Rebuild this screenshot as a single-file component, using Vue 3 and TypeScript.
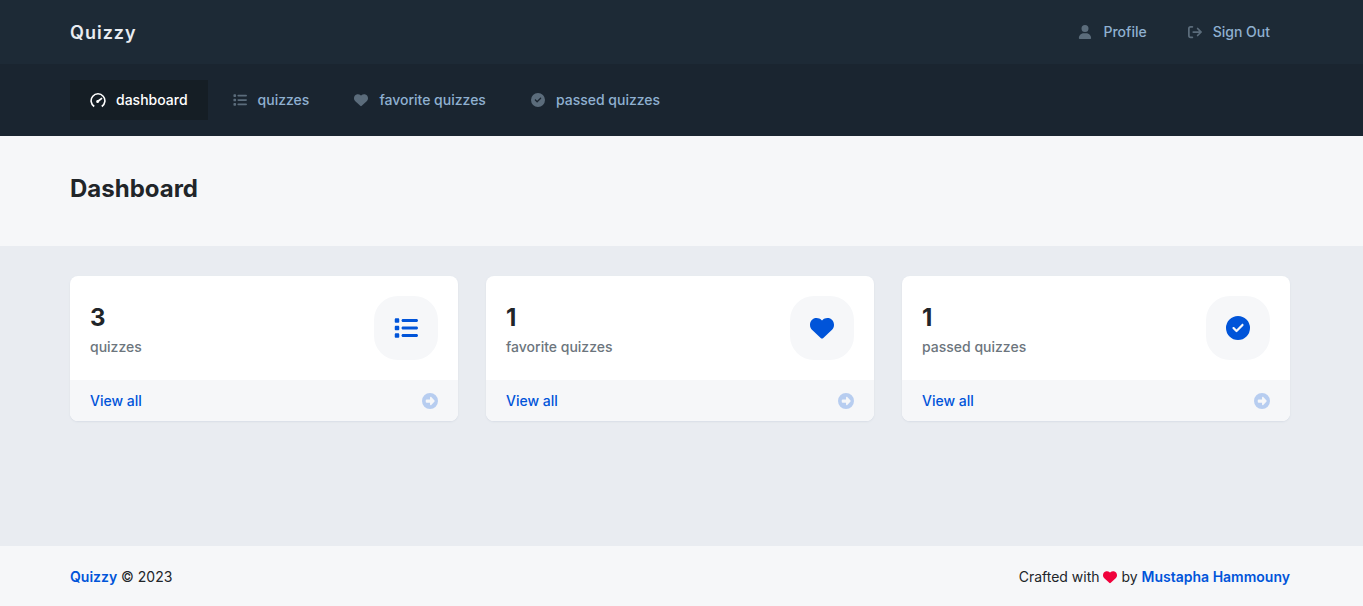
<script setup lang="ts">
type IconName = 'gauge' | 'list' | 'heart' | 'check' | 'user' | 'exit' | 'arrow'

interface Stat {
  count: number
  label: string
  icon: IconName
}

const icons: Record<IconName, { box: string; path: string }> = {
  gauge: {
    box: '0 0 16 16',
    path: 'M3.400 15.100A8.200 8.200 0 1 1 12.600 15.100L11.500 13.700A6.500 6.500 0 1 0 4.500 13.700ZM11.900 4.900 12.800 6.100 9.300 9.100A1.600 1.600 0 1 1 8 7.500Z',
  },
  list: {
    box: '0 0 512 512',
    path: 'M40 48C26.700 48 16 58.700 16 72v48c0 13.300 10.700 24 24 24h48c13.300 0 24-10.700 24-24V72c0-13.300-10.700-24-24-24H40zM192 64c-17.700 0-32 14.300-32 32s14.300 32 32 32h288c17.700 0 32-14.300 32-32s-14.300-32-32-32H192zm0 160c-17.700 0-32 14.300-32 32s14.300 32 32 32h288c17.700 0 32-14.300 32-32s-14.300-32-32-32H192zm0 160c-17.700 0-32 14.300-32 32s14.300 32 32 32h288c17.700 0 32-14.300 32-32s-14.300-32-32-32H192zM16 232v48c0 13.300 10.700 24 24 24h48c13.300 0 24-10.700 24-24v-48c0-13.300-10.700-24-24-24H40c-13.300 0-24 10.700-24 24zm24 136c-13.300 0-24 10.700-24 24v48c0 13.300 10.700 24 24 24h48c13.300 0 24-10.700 24-24v-48c0-13.300-10.700-24-24-24H40z',
  },
  heart: {
    box: '0 0 512 512',
    path: 'M47.600 300.400L228.300 469.100c7.500 7 17.400 10.900 27.700 10.900s20.200-3.900 27.700-10.900L464.400 300.400c30.400-28.300 47.600-68 47.600-109.500v-5.800c0-69.900-50.500-129.500-119.400-141C347 36.500 300.600 51.400 268 84L256 96 244 84c-32.600-32.600-79-47.500-124.600-39.900C50.500 55.600 0 115.200 0 185.100v5.800c0 41.500 17.200 81.200 47.600 109.500z',
  },
  check: {
    box: '0 0 512 512',
    path: 'M256 512A256 256 0 1 0 256 0a256 256 0 1 0 0 512zM369 209L241 337c-9.400 9.400-24.600 9.400-33.900 0l-64-64c-9.400-9.400-9.400-24.600 0-33.900s24.600-9.400 33.900 0l47 47L335 175c9.400-9.400 24.600-9.400 33.900 0s9.400 24.600 0 33.900z',
  },
  user: {
    box: '-32 0 512 512',
    path: 'M224 256A128 128 0 1 0 224 0a128 128 0 1 0 0 256zM178.300 304C79.800 304 0 383.800 0 482.300 0 498.700 13.300 512 29.700 512h388.600c16.400 0 29.700-13.300 29.700-29.700C448 383.800 368.200 304 269.700 304z',
  },
  exit: {
    box: '0 0 512 512',
    path: 'M160 32a32 32 0 0 1 0 64H96a32 32 0 0 0-32 32v256a32 32 0 0 0 32 32h64a32 32 0 0 1 0 64H96a96 96 0 0 1-96-96V128a96 96 0 0 1 96-96zM502.600 278.600l-128 128a32 32 0 0 1-45.300-45.300L402.700 288H192a32 32 0 0 1 0-64h210.700l-73.400-73.400a32 32 0 0 1 45.300-45.300l128 128a32 32 0 0 1 0 45.300z',
  },
  arrow: {
    box: '0 0 512 512',
    path: 'M256 0a256 256 0 1 0 0 512A256 256 0 1 0 256 0zM297 385.400c-4.400 4.200-10.300 6.600-16.400 6.600-13.100 0-23.700-10.600-23.700-23.700V308H150c-17.700 0-30-12-30-30v-44c0-18 12.300-30 30-30h106.900v-60.300c0-13.100 10.600-23.700 23.700-23.700 6.100 0 12 2.400 16.400 6.600l97.300 106.800c6.300 5.900 9.800 14.100 9.800 22.700s-3.500 16.800-9.800 22.700z',
  },
}

const accountLinks: { label: string; icon: IconName }[] = [
  { label: 'Profile', icon: 'user' },
  { label: 'Sign Out', icon: 'exit' },
]

const navLinks: { label: string; icon: IconName; active?: boolean }[] = [
  { label: 'dashboard', icon: 'gauge', active: true },
  { label: 'quizzes', icon: 'list' },
  { label: 'favorite quizzes', icon: 'heart' },
  { label: 'passed quizzes', icon: 'check' },
]

const stats: Stat[] = [
  { count: 3, label: 'quizzes', icon: 'list' },
  { count: 1, label: 'favorite quizzes', icon: 'heart' },
  { count: 1, label: 'passed quizzes', icon: 'check' },
]
</script>

<template>
  <div class="page">
    <header class="header">
      <div class="container header-row">
        <a href="#" class="brand">Quizzy</a>
        <nav class="account" aria-label="Account">
          <a v-for="link in accountLinks" :key="link.label" href="#" class="nav-link">
            <svg class="icon" :viewBox="icons[link.icon].box" aria-hidden="true">
              <path fill-rule="evenodd" :d="icons[link.icon].path" />
            </svg>
            {{ link.label }}
          </a>
        </nav>
      </div>
    </header>

    <div class="nav-bar">
      <nav class="container main-nav" aria-label="Main">
        <a
          v-for="link in navLinks"
          :key="link.label"
          href="#"
          class="nav-link"
          :class="{ active: link.active }"
        >
          <svg class="icon" :viewBox="icons[link.icon].box" aria-hidden="true">
            <path fill-rule="evenodd" :d="icons[link.icon].path" />
          </svg>
          {{ link.label }}
        </a>
      </nav>
    </div>

    <main>
      <div class="hero">
        <div class="container">
          <h1>Dashboard</h1>
        </div>
      </div>
      <div class="container cards">
        <section v-for="stat in stats" :key="stat.label" class="card">
          <div class="card-body">
            <div>
              <div class="count">{{ stat.count }}</div>
              <div class="label">{{ stat.label }}</div>
            </div>
            <div class="badge">
              <svg :viewBox="icons[stat.icon].box" aria-hidden="true">
                <path fill-rule="evenodd" :d="icons[stat.icon].path" />
              </svg>
            </div>
          </div>
          <a href="#" class="card-footer">
            <span>View all</span>
            <svg :viewBox="icons.arrow.box" aria-hidden="true">
              <path fill-rule="evenodd" :d="icons.arrow.path" />
            </svg>
          </a>
        </section>
      </div>
    </main>

    <footer class="footer">
      <div class="container footer-row">
        <div><a href="#">Quizzy</a> © 2023</div>
        <div>
          Crafted with
          <svg class="love" :viewBox="icons.heart.box" role="img" aria-label="love">
            <path :d="icons.heart.path" />
          </svg>
          by <a href="#">Mustapha Hammouny</a>
        </div>
      </div>
    </footer>
  </div>
</template>

<style>
body {
  margin: 0;
}
</style>

<style scoped>
.page {
  display: flex;
  flex-direction: column;
  min-height: 100vh;
  background: #e9ecf1;
  color: #212529;
  font-family: Inter, "Liberation Sans", sans-serif;
  font-size: 14px;
  line-height: 21px;
}
.page,
.page * {
  box-sizing: border-box;
}
a {
  color: #0054d9;
  text-decoration: none;
}
svg {
  fill: currentColor;
  flex: none;
}
.container {
  width: 100%;
  max-width: 1363px;
  margin: 0 auto;
  padding: 0 73px 0 70px;
}
.header {
  background: #1d2a36;
}
.header-row {
  display: flex;
  align-items: center;
  justify-content: space-between;
  height: 64px;
}
.brand {
  color: #e9ecf1;
  font-size: 18px;
  font-weight: 600;
  letter-spacing: 1px;
}
.account,
.main-nav {
  display: flex;
}
.main-nav {
  gap: 4px;
}
.nav-link {
  display: flex;
  align-items: center;
  gap: 10px;
  height: 40px;
  padding: 0 20px;
  color: #8fb0d0;
  font-weight: 500;
  line-height: 20px;
}
.icon {
  width: 16px;
  height: 14px;
  color: #5b6c7b;
}
.nav-bar {
  padding: 16px 0;
  background: #1a2530;
}
.active {
  background: #151e25;
  color: #fff;
}
.active .icon {
  height: 15px;
  color: #fff;
}
.hero {
  padding: 37px 0 41px;
  background: #f6f7f9;
}
h1 {
  margin: 0;
  font-size: 24px;
  font-weight: 700;
  line-height: 32px;
}
.cards {
  display: grid;
  grid-template-columns: repeat(3, 1fr);
  gap: 28px;
  padding-top: 30px;
  padding-bottom: 30px;
}
.card {
  overflow: hidden;
  border-radius: 8px;
  background: #fff;
  box-shadow: 0 1px 2px #d8dde5;
}
.card-body {
  display: flex;
  align-items: center;
  justify-content: space-between;
  padding: 20px;
}
.count {
  font-size: 24px;
  font-weight: 700;
  line-height: 36px;
}
.label {
  color: #6c757d;
  font-weight: 500;
}
.badge {
  display: grid;
  place-items: center;
  width: 64px;
  height: 64px;
  border-radius: 24px;
  background: #f6f7f9;
  color: #0054d9;
}
.badge svg {
  width: 24px;
  height: 24px;
}
.card-footer {
  display: flex;
  align-items: center;
  justify-content: space-between;
  padding: 10px 20px;
  background: #f6f7f9;
  font-weight: 500;
}
.card-footer svg {
  width: 16px;
  height: 16px;
  opacity: 0.25;
}
.footer {
  margin-top: auto;
  background: #f6f7f9;
}
.footer-row {
  display: flex;
  align-items: center;
  justify-content: space-between;
  min-height: 60px;
}
.footer a {
  font-weight: 600;
}
.love {
  width: 14px;
  height: 14px;
  color: #f0023c;
  vertical-align: -2px;
}
</style>
